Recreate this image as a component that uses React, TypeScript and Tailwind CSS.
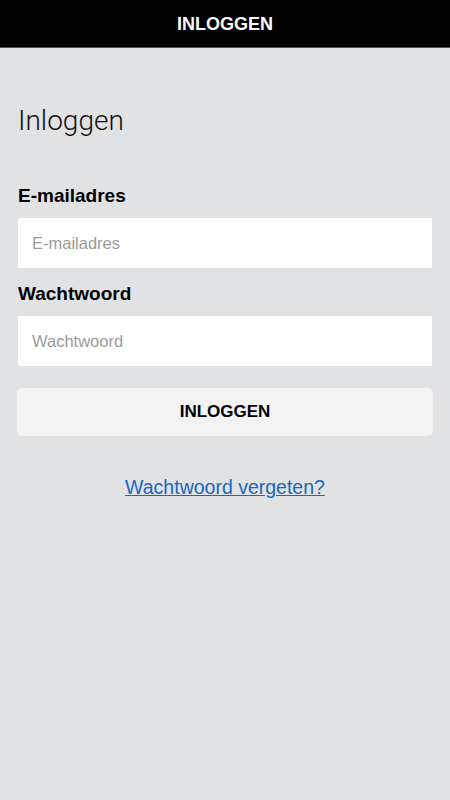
import React from "react";

export default function App() {
  return (
    <div className="min-h-[800px] w-[450px] bg-[#e1e2e4] flex flex-col" style={{ fontFamily: '"Liberation Sans", Arial, sans-serif' }}>
      <div className="h-[48px] bg-black border-b border-[#555] flex items-center justify-center">
        <span className="text-white font-bold text-[18px] leading-[22px] mt-[1px]">INLOGGEN</span>
      </div>
      <div className="px-[18px] flex flex-col">
        <h1 className="mt-[56px] text-[28px] font-light text-[#111] leading-[34px]" style={{ fontFamily: 'Roboto, "Liberation Sans", sans-serif', fontWeight: 300 }}>Inloggen</h1>
        <label className="mt-[46px] text-[19px] font-bold text-black leading-[24px]">E-mailadres</label>
        <input
          placeholder="E-mailadres"
          className="mt-[10px] h-[50px] w-full bg-white px-[14px] text-[16.5px] placeholder:text-[#9a9a9a] outline-none"
        />
        <label className="mt-[14px] text-[19px] font-bold text-black leading-[24px]">Wachtwoord</label>
        <input
          type="password"
          placeholder="Wachtwoord"
          className="mt-[10px] h-[50px] w-full bg-white px-[14px] text-[16.5px] placeholder:text-[#9a9a9a] outline-none"
        />
        <button className="mt-[22px] ml-[-1px] h-[48px] w-[416px] bg-[#f3f3f3] rounded-[5px] text-[17px] font-bold text-black">
          INLOGGEN
        </button>
        <a href="#" className="mt-[38px] self-center text-[19.5px] text-[#1b66c0] underline leading-[26px]">
          Wachtwoord vergeten?
        </a>
      </div>
    </div>
  );
}
